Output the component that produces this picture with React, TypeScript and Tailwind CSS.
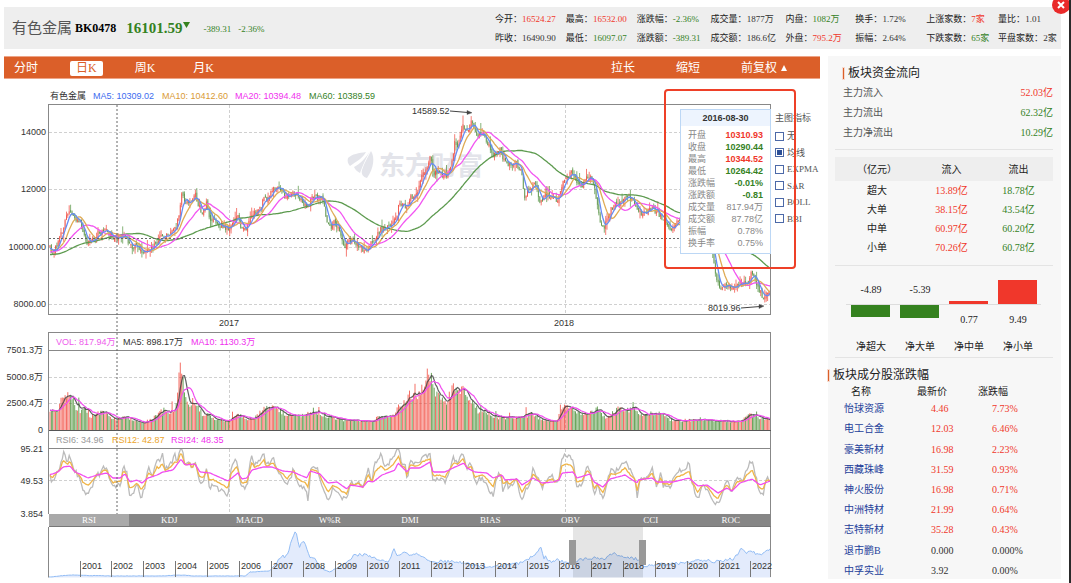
import React from "react";

type Pt = [number, number];

const RED = "#f0372b";
const GREEN = "#35821f";

/* ---------- helpers ---------- */

function rng(seed: number) {
  let s = seed;
  return () => {
    s = (s * 1664525 + 1013904223) % 4294967296;
    return s / 4294967296;
  };
}

function toPts(flat: number[]): Pt[] {
  const out: Pt[] = [];
  for (let i = 0; i < flat.length; i += 2) out.push([flat[i], flat[i + 1]]);
  return out;
}

function at(pts: Pt[], x: number) {
  if (x <= pts[0][0]) return pts[0][1];
  for (let i = 1; i < pts.length; i++) {
    if (x <= pts[i][0]) {
      const [x0, y0] = pts[i - 1];
      const [x1, y1] = pts[i];
      return y0 + ((y1 - y0) * (x - x0)) / (x1 - x0 || 1);
    }
  }
  return pts[pts.length - 1][1];
}

function average(series: number[], n: number, lead: number[] = []) {
  const all = [...lead, ...series];
  return series.map((_, i) => {
    const end = i + lead.length;
    const start = Math.max(0, end - n + 1);
    let sum = 0;
    for (let k = start; k <= end; k++) sum += all[k];
    return sum / (end - start + 1);
  });
}

const line = (xs: number[], ys: number[]) =>
  "M" + xs.map((x, i) => `${x.toFixed(1)} ${ys[i].toFixed(1)}`).join("L");

/* ---------- series ---------- */

const STEP = 1.372;
const COUNT = 526;
const xs = Array.from({ length: COUNT }, (_, i) => 50 + i * STEP);

const priceKeys = toPts([
  49, 245, 53, 253, 58, 243, 62, 232, 66, 217, 70, 210, 74, 217, 80, 223, 83, 230, 85, 238, 88, 243, 95, 240, 98, 233,
  106, 230, 112, 237, 118, 238, 125, 235, 128, 243, 132, 248, 137, 244, 142, 253, 147, 250, 155, 245, 160, 238, 168,
  235, 176, 228, 179, 215, 182, 192, 185, 205, 190, 202, 195, 193, 198, 205, 202, 213, 207, 203, 209, 217, 215, 220,
  220, 225, 228, 228, 233, 222, 238, 218, 242, 230, 247, 227, 250, 218, 255, 213, 261, 208, 263, 197, 268, 200, 273,
  188, 280, 188, 285, 197, 290, 195, 295, 193, 300, 200, 308, 207, 312, 197, 318, 197, 323, 200, 326, 217, 330, 228,
  335, 222, 338, 228, 343, 240, 345, 247, 352, 238, 358, 246, 365, 251, 373, 242, 380, 230, 390, 225, 397, 218, 399,
  202, 407, 208, 410, 198, 418, 193, 422, 175, 426, 172, 430, 155, 433, 172, 440, 173, 446, 178, 452, 162, 455, 142,
  458, 148, 463, 125, 468, 132, 472, 120, 477, 135, 482, 133, 488, 143, 493, 157, 500, 150, 503, 158, 509, 165, 517,
  163, 522, 175, 524, 197, 528, 192, 535, 183, 540, 202, 545, 195, 552, 197, 558, 200, 563, 182, 567, 177, 572, 172,
  577, 182, 581, 187, 588, 177, 593, 180, 597, 202, 600, 222, 604, 228, 608, 218, 612, 207, 622, 202, 627, 195, 633,
  202, 638, 213, 643, 213, 653, 208, 660, 215, 665, 220, 670, 228, 677, 223, 690, 222, 702, 226, 710, 240, 713, 255,
  717, 282, 720, 287, 727, 285, 733, 290, 740, 283, 747, 285, 751, 273, 755, 277, 758, 287, 763, 298, 767, 293, 771,
  292,
]);

const priceNoise = rng(7);
const closes = xs.map((x) => at(priceKeys, x) + (priceNoise() - 0.5) * 5);
const lead = [...Array(42).fill(256), ...Array(12).fill(253), ...Array(6).fill(249)];
const ma5 = average(closes, 5, lead);
const ma10 = average(closes, 11, lead);
const ma20 = average(closes, 22, lead);
const ma60 = average(closes, 60, lead);

const candles = (() => {
  const r = rng(21);
  let up = "";
  let down = "";
  let upBody = "";
  let downBody = "";
  const rising: boolean[] = [];
  closes.forEach((close, i) => {
    const open = i ? closes[i - 1] + (r() - 0.5) * 3 : close + 1;
    const hi = Math.min(open, close) - r() * r() * 10;
    const lo = Math.max(open, close) + r() * r() * 9;
    const isUp = close < open;
    rising.push(isUp);
    const x = xs[i].toFixed(1);
    const wick = `M${x} ${hi.toFixed(1)}V${lo.toFixed(1)}`;
    const body = `M${x} ${(Math.min(open, close) - 0.5).toFixed(1)}V${(Math.max(open, close) + 0.5).toFixed(1)}`;
    if (isUp) {
      up += wick;
      upBody += body;
    } else {
      down += wick;
      downBody += body;
    }
  });
  return { up, down, upBody, downBody, rising };
})();

const volumeKeys = toPts([
  49, 20, 58, 20, 62, 33, 66, 38, 70, 37, 75, 24, 82, 18, 84, 24, 90, 13, 98, 17, 105, 17, 112, 12, 118, 10, 123, 15,
  128, 12, 135, 9, 145, 8, 155, 13, 163, 20, 170, 17, 176, 24, 178, 45, 180, 64, 183, 48, 185, 30, 190, 25, 194, 31,
  197, 27, 202, 16, 208, 17, 215, 11, 228, 9, 238, 15, 247, 11, 256, 14, 263, 22, 268, 21, 272, 22, 280, 20, 287, 15,
  300, 15, 312, 17, 320, 17, 333, 12, 345, 10, 365, 9, 372, 8, 378, 13, 388, 14, 394, 16, 398, 26, 403, 25, 410, 36,
  418, 34, 424, 50, 429, 58, 432, 50, 435, 36, 440, 33, 446, 27, 454, 44, 462, 40, 468, 34, 476, 20, 488, 17, 497, 12,
  520, 13, 533, 16, 540, 11, 557, 9, 562, 24, 570, 22, 580, 16, 597, 20, 606, 12, 615, 20, 625, 22, 635, 18, 643, 16,
  660, 18, 670, 10, 690, 10, 717, 9, 740, 9, 750, 15, 760, 12, 770, 10,
]);

const volumes = (() => {
  const r = rng(99);
  return xs.map((x) => {
    const spike = r() > 0.965 ? 1.4 : 1;
    return Math.min(72, at(volumeKeys, x) * (0.84 + r() * 0.3) * spike);
  });
})();
const VOL_BASE = 430;
const volPath = (rising: boolean) =>
  volumes
    .map((v, i) =>
      candles.rising[i] === rising ? `M${xs[i].toFixed(1)} ${VOL_BASE}V${(VOL_BASE - v).toFixed(1)}` : ""
    )
    .join("");
const vol5 = average(volumes, 5, Array(5).fill(20)).map((v) => VOL_BASE - v);
const vol10 = average(volumes, 10, Array(10).fill(20)).map((v) => VOL_BASE - v);

const rsiFastKeys = toPts([
  49, 472, 52, 483, 57, 472, 60, 470, 62, 458, 64, 453, 67, 463, 70, 455, 73, 468, 80, 478, 83, 490, 88, 494, 92, 487,
  97, 473, 100, 475, 103, 467, 107, 468, 110, 482, 113, 488, 118, 485, 121, 487, 123, 467, 127, 473, 129, 495, 133,
  494, 137, 485, 141, 497, 145, 488, 148, 468, 153, 475, 157, 458, 159, 463, 162, 453, 165, 468, 170, 465, 175, 455,
  177, 462, 180, 448, 182, 449, 185, 465, 190, 462, 192, 472, 195, 460, 199, 482, 203, 483, 207, 468, 209, 488, 213,
  485, 220, 490, 228, 496, 231, 468, 237, 459, 241, 487, 247, 487, 252, 452, 254, 465, 260, 462, 264, 452, 266, 467,
  273, 458, 278, 472, 283, 477, 287, 487, 294, 468, 297, 483, 302, 487, 306, 490, 308, 500, 311, 467, 318, 470, 324,
  492, 328, 502, 333, 488, 337, 493, 342, 498, 347, 499, 350, 482, 355, 485, 358, 480, 363, 488, 368, 468, 372, 482,
  375, 462, 381, 455, 385, 467, 393, 458, 395, 453, 399, 449, 402, 468, 405, 462, 407, 482, 410, 460, 417, 465, 422,
  457, 430, 455, 433, 480, 440, 478, 445, 483, 450, 468, 453, 458, 458, 462, 463, 454, 467, 468, 471, 462, 475, 483,
  482, 477, 487, 485, 493, 497, 496, 478, 501, 472, 503, 492, 507, 480, 509, 490, 516, 478, 522, 500, 526, 488, 530,
  485, 533, 470, 538, 478, 542, 488, 548, 478, 552, 475, 555, 483, 559, 478, 562, 457, 568, 455, 573, 462, 577, 487,
  582, 485, 587, 465, 591, 475, 594, 497, 597, 485, 603, 498, 607, 482, 611, 468, 615, 472, 620, 468, 625, 460, 631,
  472, 635, 477, 637, 500, 640, 480, 647, 478, 652, 468, 657, 488, 661, 472, 663, 485, 670, 487, 677, 472, 683, 470,
  689, 463, 692, 482, 698, 500, 702, 485, 707, 488, 715, 503, 718, 504, 723, 490, 727, 480, 731, 492, 737, 478, 743,
  480, 747, 468, 752, 460, 755, 472, 758, 488, 763, 497, 766, 478, 770, 480,
]);
const rsiSlowKeys = toPts([
  49, 475, 58, 472, 63, 467, 70, 466, 75, 472, 82, 475, 88, 478, 97, 475, 107, 473, 113, 478, 120, 478, 125, 474, 130,
  482, 137, 480, 142, 483, 148, 478, 157, 475, 163, 472, 173, 470, 181, 459, 185, 465, 195, 464, 200, 472, 210, 473,
  228, 481, 238, 473, 242, 479, 247, 478, 252, 470, 263, 467, 272, 467, 283, 471, 293, 472, 307, 478, 310, 471, 320,
  474, 328, 483, 337, 482, 347, 489, 350, 485, 363, 487, 368, 481, 373, 482, 382, 475, 390, 472, 395, 470, 398, 463,
  407, 472, 410, 468, 420, 468, 430, 462, 433, 472, 445, 472, 453, 468, 464, 463, 467, 468, 475, 472, 487, 473, 493,
  478, 502, 475, 505, 480, 517, 479, 522, 485, 533, 478, 542, 483, 553, 482, 559, 480, 562, 473, 573, 472, 577, 478,
  590, 474, 594, 482, 603, 487, 610, 479, 625, 475, 637, 483, 638, 480, 652, 478, 657, 482, 673, 482, 689, 478, 698,
  486, 707, 485, 718, 493, 727, 488, 732, 491, 740, 483, 752, 479, 760, 485, 770, 481,
]);
const rsiNoise = rng(5);
const rsi24 = xs.map((x) => at(rsiSlowKeys, x));
const rsi6 = xs.map((x) => Math.max(449, at(rsiFastKeys, x) + (rsiNoise() - 0.5) * 5));
const rsi12 = rsi24.map((m, i) => m + (at(rsiFastKeys, xs[i]) - m) * 0.48 + (rsiNoise() - 0.5));

const navKeys = toPts([
  49, 577, 70, 575, 110, 576, 160, 576, 180, 575, 195, 576, 245, 576, 250, 572, 270, 571, 277, 562, 282, 555, 285,
  557, 288, 555, 292, 538, 296, 530, 299, 547, 304, 541, 307, 548, 310, 558, 315, 557, 320, 568, 330, 572, 337, 568,
  350, 560, 354, 555, 367, 555, 380, 560, 388, 562, 391, 556, 394, 548, 397, 555, 405, 553, 410, 556, 417, 554, 423,
  558, 432, 561, 460, 562, 473, 565, 493, 567, 520, 563, 527, 561, 533, 555, 538, 552, 541, 546, 544, 560, 546, 555,
  548, 562, 558, 560, 570, 564, 580, 560, 590, 558, 603, 559, 614, 553, 623, 557, 637, 559, 643, 566, 657, 565, 683,
  563, 697, 560, 723, 562, 730, 558, 733, 560, 738, 553, 742, 548, 745, 553, 753, 552, 760, 555, 771, 549,
]);
const navXs = Array.from({ length: 482 }, (_, i) => 49 + i * 1.5).filter((x) => x <= 771);
const navNoise = rng(3);
const navLine = line(
  navXs,
  navXs.map((x) => {
    const y = at(navKeys, x);
    return y + (navNoise() - 0.5) * (y < 570 ? 3 : 0.4);
  })
);

/* ---------- page data ---------- */

type Tone = "up" | "down" | "flat";
const tone: Record<Tone, string> = { up: "text-[#f0372b]", down: "text-[#35821f]", flat: "text-[#333]" };

const quotes: [string, string, Tone][] = [
  ["今开：", "16524.27", "up"],
  ["最高：", "16532.00", "up"],
  ["涨跌幅：", "-2.36%", "down"],
  ["成交量：", "1877万", "flat"],
  ["内盘：", "1082万", "down"],
  ["换手：", "1.72%", "flat"],
  ["上涨家数：", "7家", "up"],
  ["量比：", "1.01", "flat"],
  ["昨收：", "16490.90", "flat"],
  ["最低：", "16097.07", "down"],
  ["涨跌额：", "-389.31", "down"],
  ["成交额：", "186.6亿", "flat"],
  ["外盘：", "795.2万", "up"],
  ["振幅：", "2.64%", "flat"],
  ["下跌家数：", "65家", "down"],
  ["平盘家数：", "2家", "flat"],
];

const tip: [string, string, string][] = [
  ["开盘", "10310.93", "font-bold text-[#f0372b]"],
  ["收盘", "10290.44", "font-bold text-[#35821f]"],
  ["最高", "10344.52", "font-bold text-[#f0372b]"],
  ["最低", "10264.42", "font-bold text-[#35821f]"],
  ["涨跌幅", "-0.01%", "font-bold text-[#35821f]"],
  ["涨跌额", "-0.81", "font-bold text-[#35821f]"],
  ["成交量", "817.94万", "text-[#888]"],
  ["成交额", "87.78亿", "text-[#888]"],
  ["振幅", "0.78%", "text-[#888]"],
  ["换手率", "0.75%", "text-[#888]"],
];

const flows: [string, string, string][] = [
  ["超大", "13.89亿", "18.78亿"],
  ["大单", "38.15亿", "43.54亿"],
  ["中单", "60.97亿", "60.20亿"],
  ["小单", "70.26亿", "60.78亿"],
];

const stocks: [string, string, string, Tone][] = [
  ["怡球资源", "4.46", "7.73%", "up"],
  ["电工合金", "12.03", "6.46%", "up"],
  ["豪美新材", "16.98", "2.23%", "up"],
  ["西藏珠峰", "31.59", "0.93%", "up"],
  ["神火股份", "16.98", "0.71%", "up"],
  ["中洲特材", "21.99", "0.64%", "up"],
  ["志特新材", "35.28", "0.43%", "up"],
  ["退市鹏B", "0.000", "0.000%", "flat"],
  ["中孚实业", "3.92", "0.00%", "flat"],
];

const netBars = [
  { name: "净超大", value: "-4.89", x: 851, top: 305, height: 12, labelY: 293, color: GREEN },
  { name: "净大单", value: "-5.39", x: 900, top: 305, height: 13, labelY: 293, color: GREEN },
  { name: "净中单", value: "0.77", x: 949, top: 301, height: 3, labelY: 323, color: RED },
  { name: "净小单", value: "9.49", x: 998, top: 280, height: 24, labelY: 323, color: RED },
];

const SANS = "font-['Liberation_Sans','Noto_Sans_CJK_SC',sans-serif]";

/* ---------- components ---------- */

function Header() {
  return (
    <header className="flex items-center justify-between bg-[#eee]">
      <div className="flex items-center pl-2">
        <h1 className="text-[15px] leading-5 text-[#555]">有色金属</h1>
        <span className="ml-[3px] text-[12px] font-bold text-black">BK0478</span>
        <span className="ml-[10px] text-[15px] font-bold text-[#35821f]">16101.59</span>
        <svg viewBox="0 0 7 6" className="mb-[6px] h-[6px] w-[7px]" fill={GREEN} aria-hidden="true">
          <path d="M0 0H7L3.5 6Z" />
        </svg>
        <span className="ml-[14px] pt-[3px] text-[9px] text-[#35821f]">-389.31</span>
        <span className="ml-[7px] pt-[3px] text-[9px] text-[#35821f]">-2.36%</span>
      </div>
      <dl className="grid w-[566px] grid-cols-[71fr_71fr_74fr_75fr_70fr_71fr_72fr_63fr] pb-px pt-[3px] text-[9px] leading-[19px] text-[#222]">
        {quotes.map(([k, v, t]) => (
          <div key={k} className="flex whitespace-nowrap">
            <dt>{k}</dt>
            <dd className={tone[t]}>{v}</dd>
          </div>
        ))}
      </dl>
    </header>
  );
}

function Toolbar() {
  return (
    <nav className="flex h-[23px] items-center justify-between border-y border-[#eda487] bg-[#db5f29] pl-1 pr-[33px] pt-px text-[12px] leading-[15px] text-white">
      <div className="flex gap-[26px]">
        <button className="px-[6px]">分时</button>
        <button className="rounded-[2px] bg-white px-[6px] text-[#db5f29]">日K</button>
        <button className="px-[6px]">周K</button>
        <button className="px-[6px]">月K</button>
      </div>
      <div className="flex gap-[41px]">
        <button>拉长</button>
        <button>缩短</button>
        <button className="flex items-center gap-1">
          前复权
          <svg viewBox="0 0 6 6" className="h-[6px] w-[6px]" fill="currentColor" aria-hidden="true">
            <path d="M3 0L6 6H0Z" />
          </svg>
        </button>
      </div>
    </nav>
  );
}

function ChartText(p: {
  x: number;
  y: number;
  children: string;
  fill?: string;
  anchor?: "start" | "middle" | "end";
}) {
  return (
    <text x={p.x} y={p.y} fill={p.fill ?? "#333"} textAnchor={p.anchor ?? "start"} className="text-[9px]">
      {p.children}
    </text>
  );
}

function Charts() {
  return (
    <svg viewBox="4 79 767 435" className={`block w-full overflow-visible ${SANS}`} role="img" aria-label="有色金属 日K">
      {/* brand mark */}
      <g fill="#e3e4ea">
        <path d="M348 158C352 154 359 153 366 152C363 158 357 161 350 166C348 164 347 161 348 158Z" />
        <path d="M354 167C360 164 366 158 370 151C364 162 362 168 360 173C358 172 355 170 354 167Z" />
        <path d="M371 151C375 157 374 168 367 178C363 177 361 174 362 170C364 163 368 157 371 151Z" />
        <text x="379" y="175" className="text-[26px] font-bold">
          东方财富
        </text>
      </g>

      {/* dashed grid */}
      <g stroke="#d0d0d0" strokeDasharray="3 2" fill="none">
        <path d="M49 132.5H771M49 189.5H771M49 247.5H771M49 304.5H771" />
        <path d="M229.5 105V314M565.5 105V314M229.5 350V430M565.5 350V430M229.5 449V514M565.5 449V514" />
        <path d="M49 377.5H771M49 403.5H771M49 480.5H771" />
      </g>

      {/* candles */}
      <g fill="none">
        <path d={candles.up} stroke="#f0372b" strokeOpacity="0.65" />
        <path d={candles.down} stroke="#35821f" strokeOpacity="0.6" />
        <path d={candles.upBody} stroke="#f0372b" strokeOpacity="0.5" />
        <path d={candles.downBody} stroke="#35721f" strokeOpacity="0.4" />
        <g strokeWidth="1.3">
          <path d={line(xs, ma60)} stroke="#5c9a4e" />
          <path d={line(xs, ma20)} stroke="#f255f1" />
          <path d={line(xs, ma10)} stroke="#dfab55" />
          <path d={line(xs, ma5)} stroke="#668cf2" />
        </g>
      </g>

      {/* volume */}
      <g fill="none">
        <path d={volPath(true)} stroke="#f0372b" strokeOpacity="0.72" />
        <path d={volPath(false)} stroke="#35821f" strokeOpacity="0.72" />
        <path d={line(xs, vol5)} stroke="#444" strokeOpacity="0.85" strokeWidth="1.2" />
        <path d={line(xs, vol10)} stroke="#f14df0" strokeWidth="1.2" />
      </g>

      {/* oscillator */}
      <g fill="none" strokeWidth="1.3">
        <path d={line(xs, rsi6)} stroke="#bbb" />
        <path d={line(xs, rsi12)} stroke="#f0b548" />
        <path d={line(xs, rsi24)} stroke="#f14df0" />
      </g>

      {/* frames */}
      <g stroke="#888" fill="none">
        <path d="M49 104.5H771M49 314.5H771M48.5 104V315M770.5 104V315" />
        <path d="M49 332.5H771M49 350.5H771M49 448.5H771M48.5 332V514M770.5 332V514" />
        <path d="M49 430.5H771" stroke="#555" />
      </g>

      {/* crosshair */}
      <path d="M117 105V514M49 238.5H771" stroke="#666" strokeDasharray="2 2" fill="none" />

      {/* legends */}
      <ChartText x={50} y={99}>有色金属</ChartText>
      <ChartText x={93} y={99} fill="#3d6cf0">MA5: 10309.02</ChartText>
      <ChartText x={162} y={99} fill="#d99a35">MA10: 10412.60</ChartText>
      <ChartText x={235} y={99} fill="#f030ee">MA20: 10394.48</ChartText>
      <ChartText x={309} y={99} fill={GREEN}>MA60: 10389.59</ChartText>
      <ChartText x={56} y={345} fill="#ee5bec">VOL: 817.94万</ChartText>
      <ChartText x={123} y={345}>MA5: 898.17万</ChartText>
      <ChartText x={191} y={345} fill="#f030ee">MA10: 1130.3万</ChartText>
      <ChartText x={56} y={443} fill="#999">RSI6: 34.96</ChartText>
      <ChartText x={112} y={443} fill="#eca52d">RSI12: 42.87</ChartText>
      <ChartText x={171} y={443} fill="#f030ee">RSI24: 48.35</ChartText>

      {/* axes */}
      <ChartText x={46} y={135} anchor="end">14000</ChartText>
      <ChartText x={46} y={192} anchor="end">12000</ChartText>
      <ChartText x={46} y={250} anchor="end">10000.00</ChartText>
      <ChartText x={46} y={307} anchor="end">8000.00</ChartText>
      <ChartText x={43} y={353} anchor="end">7501.3万</ChartText>
      <ChartText x={43} y={380} anchor="end">5000.8万</ChartText>
      <ChartText x={43} y={406} anchor="end">2500.4万</ChartText>
      <ChartText x={43} y={433} anchor="end">0</ChartText>
      <ChartText x={43} y={452} anchor="end">95.21</ChartText>
      <ChartText x={43} y={484} anchor="end">49.53</ChartText>
      <ChartText x={43} y={517} anchor="end">3.854</ChartText>
      <ChartText x={229} y={326} anchor="middle">2017</ChartText>
      <ChartText x={564} y={326} anchor="middle">2018</ChartText>

      {/* extremes */}
      <ChartText x={412} y={114}>14589.52</ChartText>
      <ChartText x={708} y={311}>8019.96</ChartText>
      <g stroke="#444" fill="#444">
        <path d="M450 111L468 112.5M741 308L760 306.5" />
        <path d="M467 110.5L472 112.8L467 114.5ZM759 304.5L764 306L759 308.5Z" strokeWidth="0.4" />
      </g>
    </svg>
  );
}

function IndicatorTabs() {
  const names = ["RSI", "KDJ", "MACD", "W%R", "DMI", "BIAS", "OBV", "CCI", "ROC"];
  return (
    <div className="grid grid-cols-[45fr_722fr]">
      <div className="col-start-2 grid h-[13px] grid-cols-9 border-b border-[#777] bg-[#868686] text-[9px] leading-3 text-white">
        {names.map((n, i) => (
          <button key={n} className={i === 0 ? "bg-[#a9a9a9]" : "bg-[#868686]"}>
            {n}
          </button>
        ))}
      </div>
    </div>
  );
}

function Navigator() {
  const years = Array.from({ length: 22 }, (_, i) => 2001 + i);
  return (
    <svg viewBox="4 527 767 51" className={`block w-full overflow-visible ${SANS}`} role="img" aria-label="2001 – 2022">
      <path d={`${navLine}L771 577.5L49 577.5Z`} fill="#e3ebfc" />
      <path d={navLine} fill="none" stroke="#93bdf5" />
      <path d="M48.5 527V577.5M770.5 527V577" stroke="#888" fill="none" />
      {years.map((y, i) => (
        <g key={y}>
          <path d={`M${80.5 + Math.floor(i * 31.95)} 561V577`} stroke="#777" />
          <ChartText x={82 + Math.floor(i * 31.93)} y={569}>{String(y)}</ChartText>
        </g>
      ))}
      <rect x="573" y="527" width="70" height="50.5" fill="#000" fillOpacity="0.1" />
      <path d="M569 540H576V565H569ZM639 540H646V565H639Z" fill="#999" />
    </svg>
  );
}

function Tooltip() {
  return (
    <div className={`absolute right-0 top-[30px] w-[91px] border border-[#bcd7f5] bg-white text-[9px] leading-3 ${SANS}`}>
      <div className="bg-[#edf4fe] py-[2px] text-center font-bold text-[#333]">2016-08-30</div>
      <dl className="px-[7px] pb-1 pt-[3px]">
        {tip.map(([k, v, c]) => (
          <div key={k} className="flex justify-between">
            <dt className="text-[#888]">{k}</dt>
            <dd className={c}>{v}</dd>
          </div>
        ))}
      </dl>
    </div>
  );
}

function OverlayList() {
  const items = ["无", "均线", "EXPMA", "SAR", "BOLL", "BBI"];
  return (
    <div
      role="group"
      aria-labelledby="overlay-title"
      className="w-[49px] shrink-0 pl-1 pt-8 text-[9px] text-[#555]"
    >
      <h2 id="overlay-title" className="whitespace-nowrap leading-[14px]">主图指标</h2>
      <div className="mt-[3px] grid h-[99px] grid-rows-6">
        {items.map((n) => (
          <label key={n} className="flex items-center gap-[3px] whitespace-nowrap leading-3">
            <input
              type="checkbox"
              defaultChecked={n === "均线"}
              className="h-[9px] w-[9px] shrink-0 appearance-none border border-[#4c69a8] bg-white p-px checked:bg-[#2c4f96] checked:bg-clip-content"
            />
            {n}
          </label>
        ))}
      </div>
    </div>
  );
}

function NetFlowChart() {
  return (
    <svg viewBox="835 266 218 91" className="block w-full" role="img" aria-label="净流入">
      <path d="M846 304.5H1041" stroke="#ddd" />
      {netBars.map((b) => (
        <g key={b.name} fill="#222" textAnchor="middle" className="text-[10px]">
          <rect x={b.x} y={b.top} width="39" height={b.height} fill={b.color} />
          <text x={b.x + 20} y={b.labelY}>{b.value}</text>
          <text x={b.x + 20} y={350}>{b.name}</text>
        </g>
      ))}
    </svg>
  );
}

function SectionTitle({ children }: { children: string }) {
  return (
    <h2 className="flex h-[19px] items-center gap-1 text-[12px] leading-[19px] text-[#222]">
      <span className="h-[11px] w-px bg-[#db5f29] outline outline-[#f3c4b0]/60" />
      {children}
    </h2>
  );
}

function Sidebar() {
  return (
    <aside className="w-[233px] shrink-0 bg-[#f7f7f7] pt-2 text-[10px] text-[#222]">
      <div className="pl-[7px] pr-2">
        <div className="pl-2">
          <SectionTitle>板块资金流向</SectionTitle>
        </div>
        <dl className="pl-2 leading-5">
          <div className="flex justify-between">
            <dt className="text-[#555]">主力流入</dt>
            <dd className={tone.up}>52.03亿</dd>
          </div>
          <div className="flex justify-between">
            <dt className="text-[#555]">主力流出</dt>
            <dd className={tone.down}>62.32亿</dd>
          </div>
          <div className="flex justify-between">
            <dt className="text-[#555]">主力净流出</dt>
            <dd className={tone.down}>10.29亿</dd>
          </div>
        </dl>
        <hr className="mt-[6px] border-[#e4e4e4]" />
        <table className="mt-[7px] w-full table-fixed text-center leading-[19px]">
          <colgroup>
            <col className="w-[84px]" />
            <col className="w-[65px]" />
            <col />
          </colgroup>
          <thead>
            <tr className="h-[24px] bg-[#eee]">
              <th className="font-normal">（亿元）</th>
              <th className="font-normal">流入</th>
              <th className="font-normal">流出</th>
            </tr>
          </thead>
          <tbody>
            {flows.map(([n, a, b]) => (
              <tr key={n}>
                <td>{n}</td>
                <td className={tone.up}>{a}</td>
                <td className={tone.down}>{b}</td>
              </tr>
            ))}
          </tbody>
        </table>
        <hr className="mt-2 border-[#e4e4e4]" />
        <NetFlowChart />
        <hr className="border-[#e4e4e4]" />
      </div>
      <div className="mt-2">
        <SectionTitle>板块成分股涨跌幅</SectionTitle>
      </div>
      <table className="mt-[2px] h-[192px] w-full table-fixed text-left">
        <colgroup>
          <col className="w-[89px]" />
          <col className="w-[61px]" />
          <col />
        </colgroup>
        <thead>
          <tr className="h-[10px] leading-[10px]">
            <th className="pl-[23px] font-normal">名称</th>
            <th className="font-normal">最新价</th>
            <th className="font-normal">涨跌幅</th>
          </tr>
        </thead>
        <tbody>
          {stocks.map(([n, p, c, t]) => (
            <tr key={n} className="leading-3">
              <td className="pb-[2px] pl-4 pt-[6px]">
                <a href="#" className="text-[#24409a]">{n}</a>
              </td>
              <td className={`pb-[2px] pl-[14px] pt-[6px] ${tone[t]}`}>{p}</td>
              <td className={`pb-[2px] pl-[14px] pt-[6px] ${tone[t]}`}>{c}</td>
            </tr>
          ))}
        </tbody>
      </table>
    </aside>
  );
}

export default function App() {
  return (
    <div className="relative min-h-screen overflow-hidden border-r-2 border-[#2a2a2a] bg-white pl-1 pr-2 pt-[7px] font-['Liberation_Serif','Noto_Sans_CJK_SC',serif]">
      <Header />
      <main className="mt-[7px] flex gap-2">
        <section className="min-w-0 flex-1">
          <Toolbar />
          <div className="flex">
            <div className="relative min-w-0 flex-1">
              <Charts />
              <IndicatorTabs />
              <Navigator />
              <Tooltip />
              <div className="pointer-events-none absolute -right-[25px] top-[10px] z-10 h-[180px] w-[132px] rounded-[4px] border-2 border-[#ee4028]" />
            </div>
            <OverlayList />
          </div>
        </section>
        <Sidebar />
      </main>
      <button
        aria-label="关闭"
        className="absolute -right-px -top-1 flex h-[18px] w-[18px] items-center justify-center rounded-full bg-[#e92a2a]"
      >
        <svg viewBox="0 0 8 8" className="h-2 w-2" stroke="#fff" strokeWidth="2" aria-hidden="true">
          <path d="M1 1L7 7M7 1L1 7" />
        </svg>
      </button>
    </div>
  );
}
